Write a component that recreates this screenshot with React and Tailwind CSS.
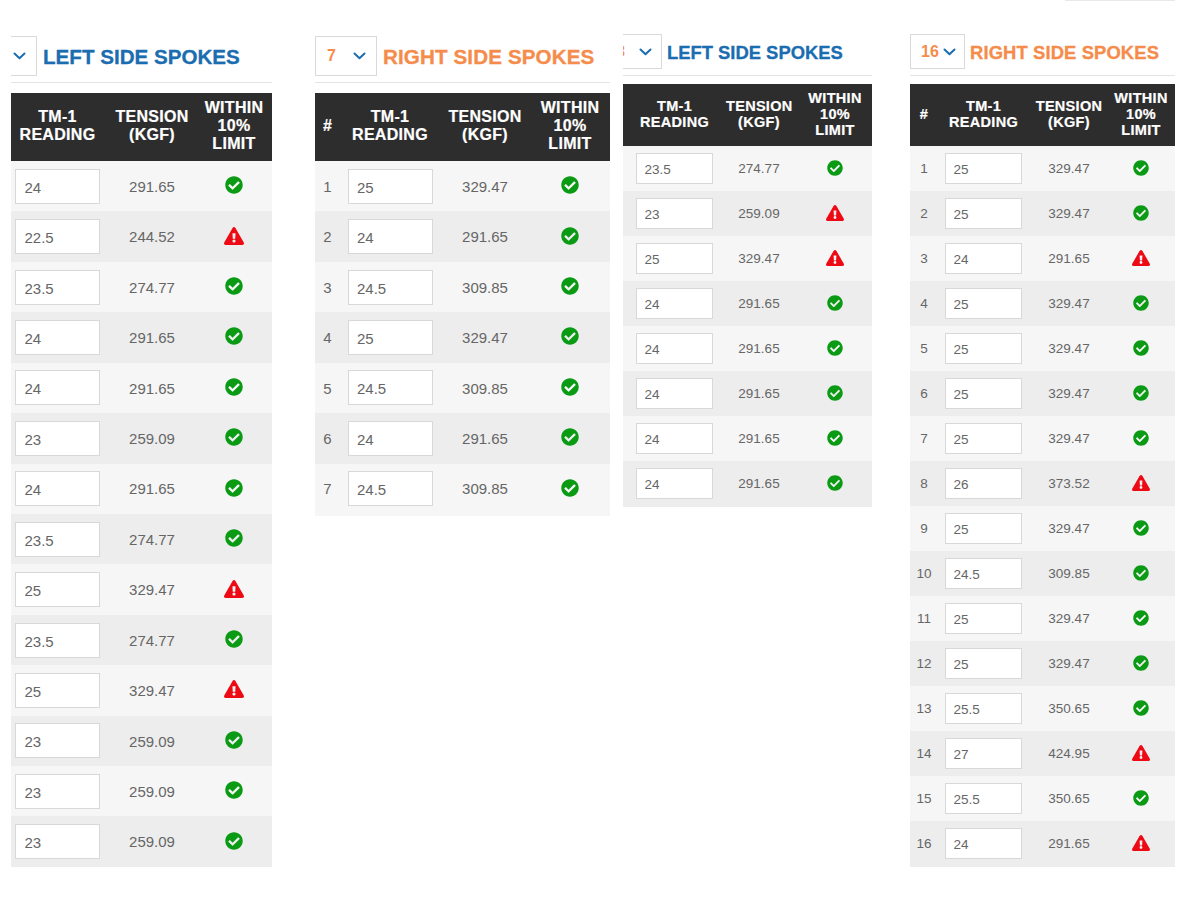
import React from "react";
import { FaCheckCircle, FaExclamationTriangle } from "react-icons/fa";

const big = {
  top: "pt-[36px]",
  selectRow: "h-[40px] gap-[6px]",
  title: "text-[20.6px] pt-[2px]",
  rule: "mt-[6px] mb-[10px]",
  head: "h-[68px] text-[16px] leading-[18px] pb-[2px]",
  row: "h-[50.43px] text-[15px]",
  cellText: "pt-[2px]",
  input: "w-[85px] h-[35px] pl-[8.5px] pt-[2px] text-[15px]",
  check: 18,
  warn: 20,
};
const small = {
  top: "pt-[34px]",
  selectRow: "h-[35px] gap-[5px]",
  title: "text-[18.4px] pt-[3px]",
  rule: "mt-[6px] mb-[8px]",
  head: "h-[62px] text-[14.5px] leading-[16px] pb-[2px]",
  row: "h-[45px] text-[13.5px]",
  cellText: "pt-[1px]",
  input: "w-[77px] h-[31px] pl-[7.5px] pt-[1px] text-[13.5px]",
  check: 16,
  warn: 18,
};

const panels = [
  {
    size: big, wrap: "ml-[11px] w-[261px]", cols: "grid-cols-[93px_96px_68px]", sel: "w-[26px] border-l-0 justify-end pr-[10px]",
    value: null, title: "LEFT SIDE SPOKES", titleColor: "text-[#1a6db0]", numbered: false,
    rows: [["24","291.65",1],["22.5","244.52",0],["23.5","274.77",1],["24","291.65",1],["24","291.65",1],["23","259.09",1],["24","291.65",1],["23.5","274.77",1],["25","329.47",0],["23.5","274.77",1],["25","329.47",0],["23","259.09",1],["23","259.09",1],["23","259.09",1]],
  },
  {
    size: big, wrap: "ml-[43px] w-[295px]", cols: "grid-cols-[25px_100px_90px_80px]", sel: "w-[62px] justify-between pl-[11px] pr-[10px]",
    value: "7", title: "RIGHT SIDE SPOKES", titleColor: "text-[#f58c4b] tracking-[0.12px]", numbered: true, tail: "h-[2px] bg-[#f6f6f6]",
    rows: [["25","329.47",1],["24","291.65",1],["24.5","309.85",1],["25","329.47",1],["24.5","309.85",1],["24","291.65",1],["24.5","309.85",1]],
  },
  {
    size: small, wrap: "ml-[13px] w-[249px]", cols: "grid-cols-[103px_66px_80px]", sel: "w-[39px] border-l-0 justify-between pr-[9px] overflow-hidden", limitPad: "pl-[6px]",
    value: "8", clipValue: "-ml-[7px]", title: "LEFT SIDE SPOKES", titleColor: "text-[#1a6db0]", numbered: false, tail: "h-px bg-[#ededed]",
    rows: [["23.5","274.77",1],["23","259.09",0],["25","329.47",0],["24","291.65",1],["24","291.65",1],["24","291.65",1],["24","291.65",1],["24","291.65",1]],
  },
  {
    size: small, wrap: "ml-[38px] w-[265px]", cols: "grid-cols-[28px_91px_80px_64px]", sel: "w-[55px] justify-between pl-[10px] pr-[8px]",
    value: "16", title: "RIGHT SIDE SPOKES", titleColor: "text-[#f58c4b] tracking-[0.12px]", numbered: true, topLine: true, tail: "h-px bg-[#ededed]",
    rows: [["25","329.47",1],["25","329.47",1],["24","291.65",0],["25","329.47",1],["25","329.47",1],["25","329.47",1],["25","329.47",1],["26","373.52",0],["25","329.47",1],["24.5","309.85",1],["25","329.47",1],["25","329.47",1],["25.5","350.65",1],["27","424.95",0],["25.5","350.65",1],["24","291.65",0]],
  },
];

function Chevron() {
  return (
    <svg width="13" height="8" viewBox="0 0 13 8" fill="none" className="shrink-0">
      <path d="M1.5 1.5 L6.5 6.2 L11.5 1.5" stroke="#1a6db0" strokeWidth="2" strokeLinecap="round" strokeLinejoin="round" />
    </svg>
  );
}

function Panel({ p }) {
  const s = p.size;
  return (
    <section className={`relative shrink-0 ${p.wrap} ${s.top}`}>
      {p.topLine && <div className="absolute top-0 right-0 w-[110px] h-px bg-[#e8e8e8]" />}
      <div className={`flex items-center ${s.selectRow}`}>
        <div className={`h-full flex items-center border border-[#d9d9d9] bg-white ${p.sel}`}>
          {p.value && <span className={`font-bold text-[16px] text-[#f58c4b] ${p.clipValue || ""}`}>{p.value}</span>}
          <Chevron />
        </div>
        <h2 className={`font-bold leading-none whitespace-nowrap [-webkit-text-stroke:0.3px] ${s.title} ${p.titleColor}`}>{p.title}</h2>
      </div>
      <div className={`h-px bg-[#e4e4e4] ${s.rule}`} />
      <div className={`grid ${p.cols} items-center bg-[#2d2d2d] text-white font-bold text-center tracking-[0.3px] [-webkit-text-stroke:0.2px] ${s.head}`}>
        {p.numbered && <div>#</div>}
        <div>TM-1<br />READING</div>
        <div>TENSION<br />(KGF)</div>
        <div className={p.limitPad || ""}>WITHIN<br />10%<br />LIMIT</div>
      </div>
      {p.rows.map((r, i) => (
        <div key={i} className={`grid ${p.cols} items-center text-center text-[#666666] ${s.row} ${i % 2 ? "bg-[#ededed]" : "bg-[#f6f6f6]"}`}>
          {p.numbered && <div className={s.cellText}>{i + 1}</div>}
          <div className="flex justify-center">
            <input readOnly value={r[0]} className={`bg-white border-[1.5px] border-[#d8d8d8] text-[#666666] outline-none ${s.input}`} />
          </div>
          <div className={s.cellText}>{r[1]}</div>
          <div className={`flex justify-center pb-[2px] ${p.limitPad || ""}`}>
            {r[2]
              ? <FaCheckCircle size={s.check} className="text-[#0a9a14]" />
              : <FaExclamationTriangle size={s.warn} className="text-[#ee0a14]" />}
          </div>
        </div>
      ))}
      {p.tail && <div className={p.tail} />}
    </section>
  );
}

export default function App() {
  return (
    <main className="w-[1200px] h-[915px] bg-white flex items-start overflow-hidden font-['Liberation_Sans',Arial,sans-serif]">
      {panels.map((p, i) => <Panel key={i} p={p} />)}
    </main>
  );
}
